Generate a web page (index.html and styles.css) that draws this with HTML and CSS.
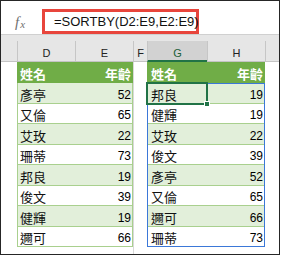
FILE: index.html
```html
<!DOCTYPE html>
<html>
<head>
<meta charset="utf-8">
<link rel="stylesheet" href="styles.css">
</head>
<body>
<div class="frame">
  <div class="fbar">
    <div class="fx"><span class="fx-f">f</span><span class="fx-x">x</span></div>
    <div class="formula">=SORTBY(D2:E9,E2:E9)</div>
  </div>
  <div class="gapband"></div>
  <div class="colhdr">
    <div class="ch ch-row"></div>
    <div class="ch ch-d">D</div>
    <div class="ch ch-e">E</div>
    <div class="ch ch-f">F</div>
    <div class="ch ch-g sel">G</div>
    <div class="ch ch-h">H</div>
    <div class="ch ch-rest"></div>
  </div>
  <div class="sheet">
    <div class="rowcol"></div>
    <div class="tbl tbl-left">
      <div class="thead"><span>姓名</span><span>年齡</span></div>
      <div class="tr alt"><span class="name">彥亭</span><span class="num">52</span></div>
      <div class="tr"><span class="name">又倫</span><span class="num">65</span></div>
      <div class="tr alt"><span class="name">艾玫</span><span class="num">22</span></div>
      <div class="tr"><span class="name">珊蒂</span><span class="num">73</span></div>
      <div class="tr alt"><span class="name">邦良</span><span class="num">19</span></div>
      <div class="tr"><span class="name">俊文</span><span class="num">39</span></div>
      <div class="tr alt"><span class="name">健輝</span><span class="num">19</span></div>
      <div class="tr"><span class="name">邇可</span><span class="num">66</span></div>
    </div>
    <div class="fcol"></div>
    <div class="tbl tbl-right">
      <div class="thead"><span>姓名</span><span>年齡</span></div>
      <div class="spill">
        <div class="tr alt"><span class="name">邦良</span><span class="num">19</span></div>
        <div class="tr"><span class="name">健輝</span><span class="num">19</span></div>
        <div class="tr alt"><span class="name">艾玫</span><span class="num">22</span></div>
        <div class="tr"><span class="name">俊文</span><span class="num">39</span></div>
        <div class="tr alt"><span class="name">彥亭</span><span class="num">52</span></div>
        <div class="tr"><span class="name">又倫</span><span class="num">65</span></div>
        <div class="tr alt"><span class="name">邇可</span><span class="num">66</span></div>
        <div class="tr"><span class="name">珊蒂</span><span class="num">73</span></div>
        <div class="selbox"><div class="handle"></div></div>
      </div>
    </div>
  </div>
</div>
</body>
</html>
```

FILE: styles.css
```css
* { box-sizing: border-box; margin: 0; padding: 0; }

html, body {
  background: #ffffff;
  width: 281px;
  height: 257px;
  overflow: hidden;
}

.frame {
  width: 280px;
  height: 255px;
  border: 1px solid #262626;
  display: flex;
  flex-direction: column;
  background: #ffffff;
  font-family: "Liberation Sans", Arial, sans-serif;
  color: #000;
  overflow: hidden;
}

/* formula bar */
.fbar {
  height: 33px;
  flex: none;
  display: flex;
  align-items: flex-end;
}

.fx {
  width: 41px;
  height: 25px;
  display: flex;
  align-items: center;
  padding-left: 14px;
  padding-top: 2px;
  font-family: "Liberation Serif", "Times New Roman", serif;
  font-style: italic;
  color: #707070;
}

.fx-f { font-size: 15px; }
.fx-x { font-size: 11px; margin-left: 1px; margin-top: 3px; }

.formula {
  width: 157px;
  height: 25px;
  border: 3px solid #e8453c;
  padding-left: 9px;
  font-size: 13px;
  line-height: 19px;
  color: #111;
  white-space: nowrap;
}

.gapband {
  height: 7px;
  flex: none;
  background: #e6e6e6;
  border-top: 1px solid #d0d0d0;
}

/* column headers */
.colhdr {
  height: 21px;
  flex: none;
  display: flex;
  background: #e6e6e6;
  border-bottom: 1px solid #c4c4c4;
}

.ch {
  height: 20px;
  display: flex;
  align-items: center;
  justify-content: center;
  padding-top: 4px;
  font-size: 11px;
  color: #222;
  border-left: 1px solid #c6c6c6;
}

.ch-row { width: 16px; border-left: none; }
.ch-d { width: 58px; }
.ch-e { width: 58px; }
.ch-f { width: 14px; }
.ch-g { width: 60px; }
.ch-h { width: 58px; }
.ch-rest { flex: 1; }

.ch.sel {
  background: #d2d2d2;
  color: #1d5f3a;
  border-bottom: 2px solid #217346;
  height: 21px;
  padding-top: 5px;
}

/* sheet */
.sheet {
  flex: 1;
  display: flex;
  align-items: flex-start;
}

.rowcol { width: 16px; flex: none; }

.tbl {
  flex: none;
  display: flex;
  flex-direction: column;
}

.tbl-left { width: 116px; }
.tbl-right { width: 118px; }

.fcol {
  width: 14px;
  flex: none;
  align-self: stretch;
  border-left: 1px solid #d9d9d9;
}

.thead {
  height: 21px;
  background: #70ad47;
  color: #ffffff;
  display: flex;
  align-items: flex-end;
  justify-content: space-between;
  font-family: "Noto Sans CJK TC", "Noto Sans CJK SC", sans-serif;
  font-weight: bold;
  font-size: 13px;
  line-height: 16px;
  padding: 0 2px 1px 3px;
}

.tbl-right .thead { padding-left: 4px; padding-right: 2px; }

.tr {
  height: 20.5px;
  display: flex;
  align-items: flex-end;
  justify-content: space-between;
  border-left: 1px solid #a9d08e;
  border-right: 1px solid #a9d08e;
  border-bottom: 1px solid #a9d08e;
  background: #ffffff;
  padding: 0 1px 0 2px;
  line-height: 16px;
}

.tbl-right .tr { padding-left: 3px; }

.tr.alt { background: #e2efda; }

.name {
  font-family: "Noto Sans CJK TC", "Noto Sans CJK SC", sans-serif;
  font-size: 13px;
  color: #111;
}

.num {
  font-size: 12px;
  color: #000;
}

.spill {
  position: relative;
  display: flex;
  flex-direction: column;
}

.spill::after {
  content: "";
  position: absolute;
  left: 0;
  top: 0;
  right: 0;
  bottom: 0;
  border: 1px solid #3b78d8;
  pointer-events: none;
}

.selbox {
  position: absolute;
  left: -1px;
  top: -1px;
  width: 62px;
  height: 22.5px;
  border: 2px solid #217346;
  z-index: 2;
}

.handle {
  position: absolute;
  right: -4px;
  bottom: -4px;
  width: 6px;
  height: 6px;
  background: #217346;
  border: 1px solid #ffffff;
}
```
